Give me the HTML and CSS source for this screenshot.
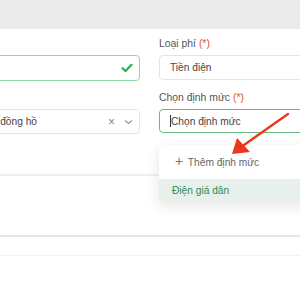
FILE: index.html
```html
<!DOCTYPE html>
<html lang="vi">
<head>
    <meta charset="UTF-8">
    <meta name="viewport" content="width=device-width, initial-scale=1.0">
    <title>Thêm phí</title>
    <link rel="stylesheet" href="styles.css">
</head>
<body>
    <div class="top-bar"></div>

    <div class="form-grid">
        <div class="field">
            <label></label>
            <div class="input valid">
                <span class="value"></span>
                <svg class="check" width="12" height="10" viewBox="0 0 12 10">
                    <path d="M1.5 5.2 L4.5 8 L10.5 1.8" fill="none" stroke="#27ae54" stroke-width="2.2" stroke-linecap="round" stroke-linejoin="round"/>
                </svg>
            </div>
        </div>
        <div class="field">
            <label>Loại phí <span class="req">(*)</span></label>
            <div class="input">
                <span class="value">Tiền điện</span>
            </div>
        </div>

        <div class="field">
            <label></label>
            <div class="input">
                <span class="value">Chọn đồng hồ</span>
                <span class="clear">×</span>
                <svg class="chevron" width="9" height="6" viewBox="0 0 9 6">
                    <path d="M1 1.5 L4.5 4.5 L8 1.5" fill="none" stroke="#9a9a9a" stroke-width="1.2"/>
                </svg>
            </div>
        </div>
        <div class="field">
            <label>Chọn định mức <span class="req">(*)</span></label>
            <div class="input focused">
                <span class="caret"></span><span class="placeholder">Chọn định mức</span>
            </div>
            <div class="dropdown">
                <div class="option add"><span class="plus">+</span> Thêm định mức</div>
                <div class="option active">Điện giá dân</div>
            </div>
        </div>
    </div>

    <div class="divider first"></div>
    <div class="divider second"></div>
    <div class="divider third"></div>

    <svg class="arrow" width="300" height="300" viewBox="0 0 300 300">
        <line x1="288" y1="114" x2="244" y2="145" stroke="#e8391e" stroke-width="2.4" stroke-linecap="round"/>
        <polygon points="232,154 237,138 250,152" fill="#e8391e"/>
    </svg>
</body>
</html>
```

FILE: styles.css
```css
* {
    box-sizing: border-box;
    margin: 0;
    padding: 0;
}

body {
    font-family: "Liberation Sans", Arial, sans-serif;
    font-size: 10.2px;
    color: #333;
    background-color: #ffffff;
    width: 300px;
    height: 300px;
    overflow: hidden;
    position: relative;
}

.top-bar {
    height: 29px;
    background-color: #ebebeb;
}

.form-grid {
    display: grid;
    grid-template-columns: 178px 200px;
    column-gap: 19px;
    row-gap: 10px;
    margin-left: -38px;
    padding-top: 8px;
}

.field {
    position: relative;
}

label {
    display: block;
    height: 14px;
    line-height: 14px;
    margin-bottom: 4px;
    color: #555;
    font-size: 10.4px;
}

.req {
    color: #e74c3c;
}

.input {
    display: flex;
    align-items: center;
    height: 25px;
    padding: 0 10px;
    border: 1px solid #e4e4e8;
    border-radius: 4px;
    color: #444;
}

.input.valid {
    height: 26px;
    border-color: #8edba5;
}

.input.focused {
    height: 24px;
    border-color: #68b884;
}

.value {
    flex: 1;
}

.check {
    margin-right: -4px;
}

.clear {
    color: #888;
    font-size: 12px;
    margin-right: 9px;
}

.chevron {
    margin-right: -4px;
}

.caret {
    width: 1px;
    height: 12px;
    background-color: #333;
}

.placeholder {
    color: #444;
}

.dropdown {
    position: absolute;
    top: 54px;
    left: 0;
    width: 200px;
    padding-top: 5px;
    background-color: #ffffff;
    border-radius: 4px;
    box-shadow: 0 4px 14px rgba(0, 0, 0, 0.1);
    z-index: 2;
}

.option {
    height: 23px;
    line-height: 23px;
    padding-left: 13px;
}

.option.add {
    color: #666;
    margin-bottom: 6px;
    padding-left: 16px;
}

.plus {
    font-size: 14px;
    color: #777;
    margin-right: 2px;
}

.option.active {
    background-color: #e7f0ea;
    color: #2e8b52;
    border-radius: 0 0 4px 4px;
}

.divider {
    height: 2px;
    background-color: #eeeef1;
}

.divider.first {
    margin-top: 40px;
}

.divider.second {
    margin-top: 59px;
    background-color: #e6e6ea;
}

.divider.third {
    margin-top: 18px;
    height: 1px;
    background-color: #f3f3f4;
}

.arrow {
    position: absolute;
    top: 0;
    left: 0;
    z-index: 3;
    pointer-events: none;
}
```
